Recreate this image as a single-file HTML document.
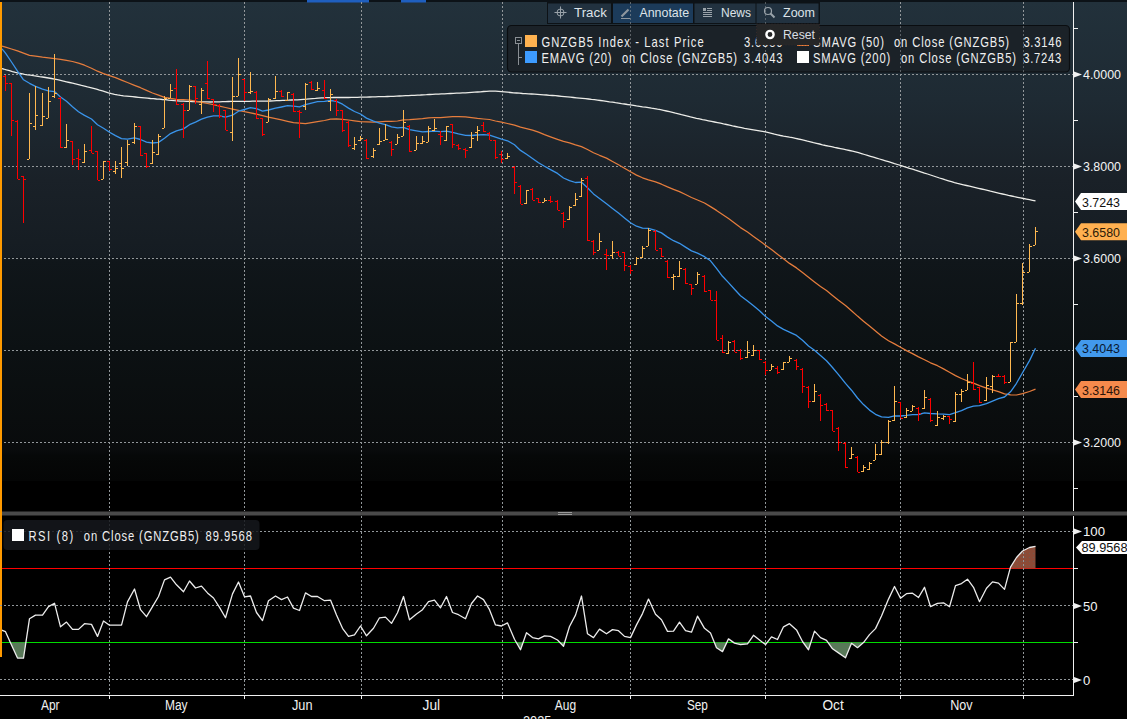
<!DOCTYPE html><html><head><meta charset="utf-8"><style>html,body{margin:0;padding:0;background:#000;width:1127px;height:719px;overflow:hidden}svg{display:block}text{font-family:"Liberation Sans",sans-serif}</style></head><body>
<svg width="1127" height="719" viewBox="0 0 1127 719">
<defs><linearGradient id="bg" gradientUnits="userSpaceOnUse" x1="0" y1="2" x2="0" y2="481"><stop offset="0.0000" stop-color="#22313b"/><stop offset="0.2046" stop-color="#1e2a33"/><stop offset="0.3716" stop-color="#1a2128"/><stop offset="0.5303" stop-color="#151c22"/><stop offset="0.5407" stop-color="#10161a"/><stop offset="0.7265" stop-color="#0c1113"/><stop offset="0.9353" stop-color="#090b0c"/><stop offset="0.9478" stop-color="#060808"/><stop offset="1.0000" stop-color="#040505"/></linearGradient><clipPath id="cm"><rect x="2" y="3" width="1071" height="478"/></clipPath><clipPath id="cr"><rect x="2" y="516" width="1071" height="179"/></clipPath><pattern id="dots" width="4" height="4" patternUnits="userSpaceOnUse"><rect width="4" height="4" fill="#8c4b37"/><rect x="1" y="1" width="1" height="1" fill="#6f5a50"/></pattern></defs>
<rect x="0" y="0" width="1127" height="719" fill="#000"/>
<rect x="0" y="2" width="1127" height="479" fill="url(#bg)"/>
<rect x="0" y="0" width="1127" height="2" fill="#0c1217"/>
<rect x="307" y="0" width="62" height="2.5" fill="#1f5fbf"/>
<rect x="401" y="0" width="25" height="2.5" fill="#1f5fbf"/>
<line x1="109.5" y1="2" x2="109.5" y2="511" stroke="#92979a" stroke-width="1" stroke-dasharray="2 2"/>
<line x1="109.5" y1="516" x2="109.5" y2="695" stroke="#92979a" stroke-width="1" stroke-dasharray="2 2"/>
<line x1="244.5" y1="2" x2="244.5" y2="511" stroke="#92979a" stroke-width="1" stroke-dasharray="2 2"/>
<line x1="244.5" y1="516" x2="244.5" y2="695" stroke="#92979a" stroke-width="1" stroke-dasharray="2 2"/>
<line x1="361.5" y1="2" x2="361.5" y2="511" stroke="#92979a" stroke-width="1" stroke-dasharray="2 2"/>
<line x1="361.5" y1="516" x2="361.5" y2="695" stroke="#92979a" stroke-width="1" stroke-dasharray="2 2"/>
<line x1="502.5" y1="2" x2="502.5" y2="511" stroke="#92979a" stroke-width="1" stroke-dasharray="2 2"/>
<line x1="502.5" y1="516" x2="502.5" y2="695" stroke="#92979a" stroke-width="1" stroke-dasharray="2 2"/>
<line x1="630.5" y1="2" x2="630.5" y2="511" stroke="#92979a" stroke-width="1" stroke-dasharray="2 2"/>
<line x1="630.5" y1="516" x2="630.5" y2="695" stroke="#92979a" stroke-width="1" stroke-dasharray="2 2"/>
<line x1="765.5" y1="2" x2="765.5" y2="511" stroke="#92979a" stroke-width="1" stroke-dasharray="2 2"/>
<line x1="765.5" y1="516" x2="765.5" y2="695" stroke="#92979a" stroke-width="1" stroke-dasharray="2 2"/>
<line x1="900.5" y1="2" x2="900.5" y2="511" stroke="#92979a" stroke-width="1" stroke-dasharray="2 2"/>
<line x1="900.5" y1="516" x2="900.5" y2="695" stroke="#92979a" stroke-width="1" stroke-dasharray="2 2"/>
<line x1="1023.5" y1="2" x2="1023.5" y2="511" stroke="#92979a" stroke-width="1" stroke-dasharray="2 2"/>
<line x1="1023.5" y1="516" x2="1023.5" y2="695" stroke="#92979a" stroke-width="1" stroke-dasharray="2 2"/>
<line x1="0" y1="74.5" x2="1073" y2="74.5" stroke="#92979a" stroke-width="1" stroke-dasharray="2 2"/>
<line x1="0" y1="166.5" x2="1073" y2="166.5" stroke="#92979a" stroke-width="1" stroke-dasharray="2 2"/>
<line x1="0" y1="258.5" x2="1073" y2="258.5" stroke="#92979a" stroke-width="1" stroke-dasharray="2 2"/>
<line x1="0" y1="350.5" x2="1073" y2="350.5" stroke="#92979a" stroke-width="1" stroke-dasharray="2 2"/>
<line x1="0" y1="442.5" x2="1073" y2="442.5" stroke="#92979a" stroke-width="1" stroke-dasharray="2 2"/>
<g clip-path="url(#cm)" fill="none" stroke-linejoin="round">
<path d="M0.5,68.2 L3.5,69 L6.5,69.9 L9.5,70.7 L12.5,71.6 L15.5,72.4 L18.5,73.1 L21.5,73.7 L24.5,74.3 L27.5,74.8 L30.5,75.2 L33.5,75.7 L36.5,76.1 L39.5,76.6 L42.5,77 L45.5,77.5 L48.5,78 L51.5,78.5 L54.5,79.1 L57.5,79.7 L60.5,80.4 L63.5,81.1 L66.5,81.8 L69.5,82.5 L72.5,83.2 L75.5,83.9 L78.5,84.6 L81.5,85.4 L84.5,86.1 L87.5,86.9 L90.5,87.6 L93.5,88.4 L96.5,89.2 L99.5,90.1 L102.5,90.9 L105.5,91.8 L108.5,92.8 L111.5,93.6 L114.5,94.3 L117.5,94.9 L120.5,95.4 L123.5,95.8 L126.5,96.1 L129.5,96.4 L132.5,96.7 L135.5,97 L138.5,97.3 L141.5,97.6 L144.5,97.9 L147.5,98.2 L150.5,98.5 L153.5,98.7 L156.5,99 L159.5,99.2 L162.5,99.5 L165.5,99.7 L168.5,100.1 L171.5,100.4 L174.5,100.7 L177.5,100.9 L180.5,101.1 L183.5,101.2 L186.5,101.3 L189.5,101.4 L192.5,101.5 L195.5,101.6 L198.5,101.7 L201.5,101.8 L204.5,101.9 L207.5,101.9 L210.5,102 L213.5,101.9 L216.5,101.9 L219.5,101.8 L222.5,101.7 L225.5,101.6 L228.5,101.5 L231.5,101.4 L234.5,101.3 L237.5,101.3 L240.5,101.3 L243.5,101.3 L246.5,101.3 L249.5,101.3 L252.5,101.2 L255.5,101.2 L258.5,101.2 L261.5,101.2 L264.5,101.2 L267.5,101.1 L270.5,101 L273.5,100.9 L276.5,100.7 L279.5,100.6 L282.5,100.4 L285.5,100.3 L288.5,100.2 L291.5,100 L294.5,99.9 L297.5,99.8 L300.5,99.6 L303.5,99.4 L306.5,99.2 L309.5,98.9 L312.5,98.6 L315.5,98.4 L318.5,98.1 L321.5,97.9 L324.5,97.8 L327.5,97.7 L330.5,97.6 L333.5,97.5 L336.5,97.5 L339.5,97.5 L342.5,97.5 L345.5,97.5 L348.5,97.5 L351.5,97.4 L354.5,97.4 L357.5,97.3 L360.5,97.2 L363.5,97.2 L366.5,97.1 L369.5,97 L372.5,96.9 L375.5,96.8 L378.5,96.7 L381.5,96.7 L384.5,96.6 L387.5,96.5 L390.5,96.4 L393.5,96.3 L396.5,96.1 L399.5,96 L402.5,95.9 L405.5,95.7 L408.5,95.6 L411.5,95.4 L414.5,95.3 L417.5,95.1 L420.5,95 L423.5,94.8 L426.5,94.7 L429.5,94.5 L432.5,94.4 L435.5,94.2 L438.5,94.1 L441.5,93.9 L444.5,93.8 L447.5,93.6 L450.5,93.5 L453.5,93.4 L456.5,93.2 L459.5,93.1 L462.5,92.9 L465.5,92.8 L468.5,92.6 L471.5,92.4 L474.5,92.2 L477.5,92 L480.5,91.8 L483.5,91.5 L486.5,91.3 L489.5,91.2 L492.5,91.2 L495.5,91.2 L498.5,91.4 L501.5,91.6 L504.5,91.9 L507.5,92.2 L510.5,92.5 L513.5,92.8 L516.5,93 L519.5,93.2 L522.5,93.5 L525.5,93.7 L528.5,93.9 L531.5,94 L534.5,94.2 L537.5,94.4 L540.5,94.6 L543.5,94.8 L546.5,95 L549.5,95.3 L552.5,95.5 L555.5,95.7 L558.5,96 L561.5,96.3 L564.5,96.6 L567.5,96.9 L570.5,97.2 L573.5,97.5 L576.5,97.8 L579.5,98.1 L582.5,98.4 L585.5,98.7 L588.5,99 L591.5,99.4 L594.5,99.7 L597.5,100.1 L600.5,100.5 L603.5,100.9 L606.5,101.3 L609.5,101.8 L612.5,102.2 L615.5,102.7 L618.5,103.1 L621.5,103.6 L624.5,104 L627.5,104.5 L630.5,104.9 L633.5,105.4 L636.5,105.9 L639.5,106.3 L642.5,106.8 L645.5,107.2 L648.5,107.7 L651.5,108.2 L654.5,108.6 L657.5,109.2 L660.5,109.7 L663.5,110.3 L666.5,111 L669.5,111.7 L672.5,112.4 L675.5,113.2 L678.5,113.9 L681.5,114.7 L684.5,115.4 L687.5,116.1 L690.5,116.9 L693.5,117.6 L696.5,118.3 L699.5,118.9 L702.5,119.6 L705.5,120.2 L708.5,120.8 L711.5,121.4 L714.5,122 L717.5,122.6 L720.5,123.2 L723.5,123.9 L726.5,124.5 L729.5,125.2 L732.5,125.9 L735.5,126.5 L738.5,127.1 L741.5,127.7 L744.5,128.3 L747.5,128.8 L750.5,129.3 L753.5,129.8 L756.5,130.3 L759.5,130.8 L762.5,131.3 L765.5,131.9 L768.5,132.6 L771.5,133.3 L774.5,134.1 L777.5,134.8 L780.5,135.5 L783.5,136.1 L786.5,136.6 L789.5,137.2 L792.5,137.7 L795.5,138.3 L798.5,139 L801.5,139.6 L804.5,140.3 L807.5,141.1 L810.5,141.8 L813.5,142.6 L816.5,143.3 L819.5,144 L822.5,144.8 L825.5,145.5 L828.5,146.1 L831.5,146.7 L834.5,147.4 L837.5,148 L840.5,148.6 L843.5,149.2 L846.5,149.8 L849.5,150.5 L852.5,151.2 L855.5,151.9 L858.5,152.7 L861.5,153.6 L864.5,154.5 L867.5,155.4 L870.5,156.3 L873.5,157.2 L876.5,158.1 L879.5,159 L882.5,159.9 L885.5,160.8 L888.5,161.7 L891.5,162.6 L894.5,163.6 L897.5,164.5 L900.5,165.4 L903.5,166.4 L906.5,167.3 L909.5,168.3 L912.5,169.2 L915.5,170.2 L918.5,171.1 L921.5,172.1 L924.5,173.1 L927.5,174 L930.5,175 L933.5,176 L936.5,177 L939.5,178 L942.5,178.9 L945.5,179.9 L948.5,180.8 L951.5,181.7 L954.5,182.6 L957.5,183.4 L960.5,184.1 L963.5,184.8 L966.5,185.5 L969.5,186.2 L972.5,186.9 L975.5,187.6 L978.5,188.3 L981.5,189 L984.5,189.7 L987.5,190.4 L990.5,191.2 L993.5,191.9 L996.5,192.6 L999.5,193.3 L1002.5,194 L1005.5,194.7 L1008.5,195.4 L1011.5,196 L1014.5,196.7 L1017.5,197.3 L1020.5,197.9 L1023.5,198.5 L1026.5,199.1 L1029.5,199.7 L1032.5,200.3 L1035.5,200.9" stroke="#ececE8" stroke-width="1.3"/>
<path d="M2,46.2 L5.5,47.1 L11.5,49 L17.5,50.9 L23.5,53.1 L29.5,55.3 L35.5,56.2 L42.5,57.2 L48.5,57.9 L54.5,58.6 L60.5,59.3 L66.5,60.3 L72.5,61.5 L78.5,63.2 L84.5,65.2 L91.5,68.2 L97.5,71.2 L103.5,73.7 L109.5,75.7 L115.5,77.7 L121.5,80.1 L127.5,82.5 L134.5,85.3 L140.5,87.7 L146.5,90.4 L152.5,93 L158.5,95.2 L164.5,97.3 L170.5,98.4 L176.5,99.3 L183.5,99.7 L189.5,100 L195.5,101.1 L201.5,102.3 L207.5,103.5 L213.5,104.7 L219.5,106.1 L225.5,107.5 L232.5,109.1 L238.5,110.4 L244.5,111.7 L250.5,112.8 L256.5,114.1 L262.5,115.7 L268.5,117.2 L275.5,118.6 L281.5,119.9 L287.5,121.3 L293.5,122.6 L299.5,123.2 L305.5,123.7 L311.5,122.6 L317.5,121.7 L324.5,120.5 L330.5,119.1 L336.5,118.8 L342.5,119.4 L348.5,120 L354.5,120.8 L360.5,121.7 L366.5,121.9 L373.5,122.1 L379.5,121.8 L385.5,121.4 L391.5,121.3 L397.5,121 L403.5,119.9 L409.5,119.7 L416.5,119.1 L422.5,118.6 L428.5,117.8 L434.5,117.5 L440.5,117.7 L446.5,117.1 L452.5,116.7 L458.5,116.6 L465.5,116.8 L471.5,117.6 L477.5,118.4 L483.5,119 L489.5,119.5 L495.5,121 L501.5,122.2 L507.5,123.5 L514.5,125.2 L520.5,127.2 L526.5,128.7 L532.5,130.1 L538.5,132.2 L544.5,134.7 L550.5,136.9 L557.5,139.3 L563.5,141.3 L569.5,142.8 L575.5,144.8 L581.5,146.6 L587.5,149.5 L593.5,152.7 L599.5,155.3 L606.5,158.1 L612.5,161.5 L618.5,164.8 L624.5,168.3 L630.5,171.8 L636.5,175.1 L642.5,177.8 L648.5,179.8 L655.5,181.9 L661.5,184.2 L667.5,186.9 L673.5,189.3 L679.5,191.6 L685.5,194.5 L691.5,197.5 L697.5,200 L704.5,203 L710.5,206.6 L716.5,210.4 L722.5,214.5 L728.5,218.6 L734.5,223 L740.5,227.6 L747.5,232 L753.5,236.4 L759.5,240.7 L765.5,245.2 L771.5,249.5 L777.5,254.2 L783.5,258.8 L789.5,263.4 L796.5,267.9 L802.5,272.5 L808.5,277.3 L814.5,282 L820.5,286.5 L826.5,290.6 L832.5,295.4 L838.5,300.3 L845.5,305.6 L851.5,310.7 L857.5,316.1 L863.5,321.2 L869.5,326.1 L875.5,331 L881.5,335.9 L888.5,340.7 L894.5,343.9 L900.5,347.2 L906.5,350.6 L912.5,353.6 L918.5,356.9 L924.5,359.7 L930.5,362.8 L937.5,365.7 L943.5,368.9 L949.5,372.3 L955.5,375.6 L961.5,378.5 L967.5,381 L973.5,383.2 L979.5,385.7 L986.5,388.1 L992.5,389.9 L998.5,391.7 L1004.5,393.9 L1010.5,394.9 L1016.5,395 L1022.5,393.6 L1029.5,391.5 L1035.5,389.2" stroke="#e67d3d" stroke-width="1.25"/>
<path d="M2,48.8 L5.5,53.2 L11.5,62 L17.5,71.2 L23.5,79.8 L29.5,83.3 L35.5,86.4 L42.5,89.2 L48.5,90.8 L54.5,91.6 L60.5,97 L66.5,101.3 L72.5,106.7 L78.5,111.7 L84.5,115.4 L91.5,119 L97.5,124.8 L103.5,128.3 L109.5,132.2 L115.5,135.6 L121.5,138.7 L127.5,139.2 L134.5,137.9 L140.5,139.5 L146.5,142.1 L152.5,143 L158.5,142.4 L164.5,138.2 L170.5,133.6 L176.5,130.8 L183.5,128.9 L189.5,124.7 L195.5,122.1 L201.5,119.1 L207.5,117.1 L213.5,115.8 L219.5,115.9 L225.5,117.2 L232.5,115.2 L238.5,111.2 L244.5,109.5 L250.5,107.7 L256.5,108.7 L262.5,111.1 L268.5,110 L275.5,108.2 L281.5,107 L287.5,105.7 L293.5,106.2 L299.5,106.8 L305.5,104.7 L311.5,103.1 L317.5,101.7 L324.5,101.3 L330.5,100.5 L336.5,101.4 L342.5,104.2 L348.5,108.1 L354.5,111.5 L360.5,114 L366.5,118.1 L373.5,121.2 L379.5,123.1 L385.5,124.6 L391.5,126.9 L397.5,127.9 L403.5,127.3 L409.5,129.6 L416.5,130.9 L422.5,131.9 L428.5,131.5 L434.5,131.2 L440.5,131.6 L446.5,131.1 L452.5,132.3 L458.5,133.8 L465.5,135.3 L471.5,135.5 L477.5,135 L483.5,134.6 L489.5,135.1 L495.5,137.2 L501.5,139.2 L507.5,140.8 L514.5,144.8 L520.5,150.4 L526.5,154.2 L532.5,158.5 L538.5,162.7 L544.5,166.3 L550.5,169.6 L557.5,173.4 L563.5,178 L569.5,180.7 L575.5,182.5 L581.5,182.2 L587.5,187.8 L593.5,193.9 L599.5,198.4 L606.5,203.8 L612.5,208.4 L618.5,212.9 L624.5,217.9 L630.5,222.8 L636.5,226.2 L642.5,228.2 L648.5,228.4 L655.5,230.4 L661.5,232.9 L667.5,237.1 L673.5,240.7 L679.5,243.3 L685.5,247.1 L691.5,250.9 L697.5,253.1 L704.5,256.7 L710.5,260.8 L716.5,268.3 L722.5,276.3 L728.5,282.6 L734.5,289.2 L740.5,295.7 L747.5,301.1 L753.5,305.7 L759.5,310.8 L765.5,316.4 L771.5,321 L777.5,325.9 L783.5,329.4 L789.5,332.1 L796.5,335.4 L802.5,340.2 L808.5,346 L814.5,350.3 L820.5,355.6 L826.5,360.8 L832.5,367.5 L838.5,374.6 L845.5,383.4 L851.5,390.2 L857.5,398 L863.5,404.6 L869.5,410.1 L875.5,414.3 L881.5,416.9 L888.5,417.3 L894.5,415.8 L900.5,416 L906.5,415.4 L912.5,414.6 L918.5,414.5 L924.5,412.8 L930.5,413.5 L937.5,413.9 L943.5,414.1 L949.5,414.6 L955.5,412.7 L961.5,410.6 L967.5,407.9 L973.5,406.1 L979.5,405.7 L986.5,403.7 L992.5,401.1 L998.5,398.7 L1004.5,397 L1010.5,391.8 L1016.5,383.3 L1022.5,372.7 L1029.5,360.6 L1035.5,348.2" stroke="#3a94ea" stroke-width="1.3"/>
</g>
<g clip-path="url(#cm)" shape-rendering="crispEdges">
<path d="M5,75h1v16h-1z M3,76h2v1h-2z M6,83h2v1h-2z" fill="#ff0000"/>
<path d="M11,83h1v53h-1z M9,83h2v1h-2z M12,120h2v1h-2z" fill="#ff0000"/>
<path d="M17,120h1v59h-1z M15,121h2v1h-2z M18,179h2v1h-2z" fill="#ff0000"/>
<path d="M23,176h1v47h-1z M21,176h2v1h-2z M24,179h2v1h-2z" fill="#ff0000"/>
<path d="M29,93h1v66h-1z M27,159h2v1h-2z M30,123h2v1h-2z" fill="#ffb850"/>
<path d="M35,86h1v44h-1z M33,126h2v1h-2z M36,115h2v1h-2z" fill="#ffb850"/>
<path d="M42,93h1v33h-1z M40,125h2v1h-2z M43,116h2v1h-2z" fill="#ffb850"/>
<path d="M48,87h1v31h-1z M46,118h2v1h-2z M49,101h2v1h-2z" fill="#ffb850"/>
<path d="M54,54h1v44h-1z M52,96h2v1h-2z M55,93h2v1h-2z" fill="#ffb850"/>
<path d="M60,97h1v51h-1z M58,98h2v1h-2z M61,147h2v1h-2z" fill="#ff0000"/>
<path d="M66,124h1v24h-1z M64,147h2v1h-2z M67,140h2v1h-2z" fill="#ffb850"/>
<path d="M72,141h1v24h-1z M70,141h2v1h-2z M73,159h2v1h-2z" fill="#ff0000"/>
<path d="M78,149h1v21h-1z M76,158h2v1h-2z M79,159h2v1h-2z" fill="#ff0000"/>
<path d="M84,144h1v19h-1z M82,162h2v1h-2z M85,151h2v1h-2z" fill="#ffb850"/>
<path d="M91,126h1v27h-1z M89,150h2v1h-2z M92,153h2v1h-2z" fill="#ff0000"/>
<path d="M97,151h1v29h-1z M95,151h2v1h-2z M98,180h2v1h-2z" fill="#ff0000"/>
<path d="M103,161h1v18h-1z M101,179h2v1h-2z M104,161h2v1h-2z" fill="#ffb850"/>
<path d="M109,161h1v10h-1z M107,161h2v1h-2z M110,169h2v1h-2z" fill="#ff0000"/>
<path d="M115,161h1v13h-1z M113,171h2v1h-2z M116,168h2v1h-2z" fill="#ffb850"/>
<path d="M121,147h1v31h-1z M119,163h2v1h-2z M122,168h2v1h-2z" fill="#ffb850"/>
<path d="M127,140h1v26h-1z M125,162h2v1h-2z M128,144h2v1h-2z" fill="#ffb850"/>
<path d="M134,123h1v21h-1z M132,142h2v1h-2z M135,126h2v1h-2z" fill="#ffb850"/>
<path d="M140,126h1v30h-1z M138,126h2v1h-2z M141,155h2v1h-2z" fill="#ff0000"/>
<path d="M146,153h1v15h-1z M144,153h2v1h-2z M147,166h2v1h-2z" fill="#ff0000"/>
<path d="M152,140h1v24h-1z M150,163h2v1h-2z M153,152h2v1h-2z" fill="#ffb850"/>
<path d="M158,134h1v21h-1z M156,154h2v1h-2z M159,136h2v1h-2z" fill="#ffb850"/>
<path d="M164,96h1v32h-1z M162,128h2v1h-2z M165,98h2v1h-2z" fill="#ffb850"/>
<path d="M170,84h1v14h-1z M168,98h2v1h-2z M171,90h2v1h-2z" fill="#ffb850"/>
<path d="M176,69h1v36h-1z M174,88h2v1h-2z M177,104h2v1h-2z" fill="#ff0000"/>
<path d="M183,103h1v35h-1z M181,104h2v1h-2z M184,110h2v1h-2z" fill="#ff0000"/>
<path d="M189,85h1v25h-1z M187,110h2v1h-2z M190,86h2v1h-2z" fill="#ffb850"/>
<path d="M195,86h1v18h-1z M193,86h2v1h-2z M196,98h2v1h-2z" fill="#ff0000"/>
<path d="M201,88h1v26h-1z M199,104h2v1h-2z M202,90h2v1h-2z" fill="#ffb850"/>
<path d="M207,61h1v38h-1z M205,83h2v1h-2z M208,98h2v1h-2z" fill="#ff0000"/>
<path d="M213,99h1v13h-1z M211,99h2v1h-2z M214,104h2v1h-2z" fill="#ff0000"/>
<path d="M219,104h1v14h-1z M217,105h2v1h-2z M220,116h2v1h-2z" fill="#ff0000"/>
<path d="M225,110h1v20h-1z M223,110h2v1h-2z M226,130h2v1h-2z" fill="#ff0000"/>
<path d="M232,77h1v64h-1z M230,132h2v1h-2z M233,96h2v1h-2z" fill="#ffb850"/>
<path d="M238,58h1v38h-1z M236,96h2v1h-2z M239,74h2v1h-2z" fill="#ffb850"/>
<path d="M244,79h1v22h-1z M242,79h2v1h-2z M245,92h2v1h-2z" fill="#ff0000"/>
<path d="M250,72h1v22h-1z M248,92h2v1h-2z M251,91h2v1h-2z" fill="#ffb850"/>
<path d="M256,91h1v28h-1z M254,92h2v1h-2z M257,118h2v1h-2z" fill="#ff0000"/>
<path d="M262,118h1v18h-1z M260,118h2v1h-2z M263,134h2v1h-2z" fill="#ff0000"/>
<path d="M268,98h1v24h-1z M266,122h2v1h-2z M269,99h2v1h-2z" fill="#ffb850"/>
<path d="M275,76h1v23h-1z M273,98h2v1h-2z M276,91h2v1h-2z" fill="#ffb850"/>
<path d="M281,90h1v7h-1z M279,91h2v1h-2z M282,96h2v1h-2z" fill="#ff0000"/>
<path d="M287,92h1v9h-1z M285,100h2v1h-2z M288,92h2v1h-2z" fill="#ffb850"/>
<path d="M293,93h1v19h-1z M291,94h2v1h-2z M294,111h2v1h-2z" fill="#ff0000"/>
<path d="M299,110h1v28h-1z M297,111h2v1h-2z M300,112h2v1h-2z" fill="#ff0000"/>
<path d="M305,83h1v27h-1z M303,106h2v1h-2z M306,84h2v1h-2z" fill="#ffb850"/>
<path d="M311,81h1v9h-1z M309,82h2v1h-2z M312,89h2v1h-2z" fill="#ff0000"/>
<path d="M317,82h1v9h-1z M315,90h2v1h-2z M318,88h2v1h-2z" fill="#ffb850"/>
<path d="M324,80h1v19h-1z M322,90h2v1h-2z M325,98h2v1h-2z" fill="#ff0000"/>
<path d="M330,89h1v22h-1z M328,101h2v1h-2z M331,94h2v1h-2z" fill="#ffb850"/>
<path d="M336,99h1v17h-1z M334,100h2v1h-2z M337,110h2v1h-2z" fill="#ff0000"/>
<path d="M342,110h1v22h-1z M340,110h2v1h-2z M343,130h2v1h-2z" fill="#ff0000"/>
<path d="M348,121h1v26h-1z M346,122h2v1h-2z M349,145h2v1h-2z" fill="#ff0000"/>
<path d="M354,137h1v13h-1z M352,148h2v1h-2z M355,144h2v1h-2z" fill="#ffb850"/>
<path d="M360,136h1v5h-1z M358,140h2v1h-2z M361,138h2v1h-2z" fill="#ffb850"/>
<path d="M366,139h1v20h-1z M364,140h2v1h-2z M367,158h2v1h-2z" fill="#ff0000"/>
<path d="M373,148h1v10h-1z M371,156h2v1h-2z M374,150h2v1h-2z" fill="#ffb850"/>
<path d="M379,128h1v17h-1z M377,144h2v1h-2z M380,141h2v1h-2z" fill="#ffb850"/>
<path d="M385,124h1v16h-1z M383,140h2v1h-2z M386,139h2v1h-2z" fill="#ffb850"/>
<path d="M391,141h1v15h-1z M389,142h2v1h-2z M392,149h2v1h-2z" fill="#ff0000"/>
<path d="M397,134h1v10h-1z M395,144h2v1h-2z M398,137h2v1h-2z" fill="#ffb850"/>
<path d="M403,110h1v26h-1z M401,136h2v1h-2z M404,122h2v1h-2z" fill="#ffb850"/>
<path d="M409,125h1v27h-1z M407,126h2v1h-2z M410,151h2v1h-2z" fill="#ff0000"/>
<path d="M416,136h1v14h-1z M414,150h2v1h-2z M417,143h2v1h-2z" fill="#ffb850"/>
<path d="M422,136h1v8h-1z M420,143h2v1h-2z M423,141h2v1h-2z" fill="#ffb850"/>
<path d="M428,126h1v16h-1z M426,142h2v1h-2z M429,128h2v1h-2z" fill="#ffb850"/>
<path d="M434,119h1v12h-1z M432,130h2v1h-2z M435,128h2v1h-2z" fill="#ffb850"/>
<path d="M440,131h1v14h-1z M438,134h2v1h-2z M441,136h2v1h-2z" fill="#ff0000"/>
<path d="M446,126h1v15h-1z M444,140h2v1h-2z M447,126h2v1h-2z" fill="#ffb850"/>
<path d="M452,124h1v24h-1z M450,124h2v1h-2z M453,144h2v1h-2z" fill="#ff0000"/>
<path d="M458,144h1v6h-1z M456,145h2v1h-2z M459,148h2v1h-2z" fill="#ff0000"/>
<path d="M465,148h1v10h-1z M463,149h2v1h-2z M466,150h2v1h-2z" fill="#ff0000"/>
<path d="M471,132h1v16h-1z M469,147h2v1h-2z M472,138h2v1h-2z" fill="#ffb850"/>
<path d="M477,126h1v15h-1z M475,132h2v1h-2z M478,130h2v1h-2z" fill="#ffb850"/>
<path d="M483,122h1v10h-1z M481,125h2v1h-2z M484,131h2v1h-2z" fill="#ff0000"/>
<path d="M489,132h1v8h-1z M487,133h2v1h-2z M490,140h2v1h-2z" fill="#ff0000"/>
<path d="M495,140h1v19h-1z M493,140h2v1h-2z M496,157h2v1h-2z" fill="#ff0000"/>
<path d="M501,151h1v12h-1z M499,154h2v1h-2z M502,159h2v1h-2z" fill="#ff0000"/>
<path d="M507,153h1v6h-1z M505,158h2v1h-2z M508,156h2v1h-2z" fill="#ffb850"/>
<path d="M514,166h1v28h-1z M512,167h2v1h-2z M515,182h2v1h-2z" fill="#ff0000"/>
<path d="M520,185h1v19h-1z M518,186h2v1h-2z M521,204h2v1h-2z" fill="#ff0000"/>
<path d="M526,190h1v14h-1z M524,203h2v1h-2z M527,190h2v1h-2z" fill="#ffb850"/>
<path d="M532,188h1v12h-1z M530,189h2v1h-2z M533,200h2v1h-2z" fill="#ff0000"/>
<path d="M538,198h1v5h-1z M536,198h2v1h-2z M539,202h2v1h-2z" fill="#ff0000"/>
<path d="M544,198h1v4h-1z M542,202h2v1h-2z M545,200h2v1h-2z" fill="#ffb850"/>
<path d="M550,196h1v7h-1z M548,200h2v1h-2z M551,201h2v1h-2z" fill="#ff0000"/>
<path d="M557,200h1v10h-1z M555,201h2v1h-2z M558,210h2v1h-2z" fill="#ff0000"/>
<path d="M563,212h1v16h-1z M561,213h2v1h-2z M564,221h2v1h-2z" fill="#ff0000"/>
<path d="M569,206h1v14h-1z M567,219h2v1h-2z M570,207h2v1h-2z" fill="#ffb850"/>
<path d="M575,193h1v13h-1z M573,205h2v1h-2z M576,199h2v1h-2z" fill="#ffb850"/>
<path d="M581,178h1v19h-1z M579,196h2v1h-2z M582,180h2v1h-2z" fill="#ffb850"/>
<path d="M587,176h1v65h-1z M585,178h2v1h-2z M588,240h2v1h-2z" fill="#ff0000"/>
<path d="M593,240h1v15h-1z M591,241h2v1h-2z M594,252h2v1h-2z" fill="#ff0000"/>
<path d="M599,233h1v17h-1z M597,250h2v1h-2z M600,241h2v1h-2z" fill="#ffb850"/>
<path d="M606,249h1v21h-1z M604,254h2v1h-2z M607,255h2v1h-2z" fill="#ff0000"/>
<path d="M612,241h1v18h-1z M610,255h2v1h-2z M613,252h2v1h-2z" fill="#ffb850"/>
<path d="M618,251h1v5h-1z M616,252h2v1h-2z M619,256h2v1h-2z" fill="#ff0000"/>
<path d="M624,252h1v19h-1z M622,252h2v1h-2z M625,265h2v1h-2z" fill="#ff0000"/>
<path d="M630,265h1v9h-1z M628,266h2v1h-2z M631,270h2v1h-2z" fill="#ff0000"/>
<path d="M636,257h1v8h-1z M634,264h2v1h-2z M637,258h2v1h-2z" fill="#ffb850"/>
<path d="M642,246h1v12h-1z M640,257h2v1h-2z M643,248h2v1h-2z" fill="#ffb850"/>
<path d="M648,228h1v18h-1z M646,246h2v1h-2z M649,230h2v1h-2z" fill="#ffb850"/>
<path d="M655,230h1v20h-1z M653,231h2v1h-2z M656,250h2v1h-2z" fill="#ff0000"/>
<path d="M661,248h1v9h-1z M659,248h2v1h-2z M662,256h2v1h-2z" fill="#ff0000"/>
<path d="M667,260h1v18h-1z M665,261h2v1h-2z M668,277h2v1h-2z" fill="#ff0000"/>
<path d="M673,274h1v16h-1z M671,277h2v1h-2z M674,276h2v1h-2z" fill="#ffb850"/>
<path d="M679,261h1v16h-1z M677,276h2v1h-2z M680,268h2v1h-2z" fill="#ffb850"/>
<path d="M685,268h1v16h-1z M683,269h2v1h-2z M686,283h2v1h-2z" fill="#ff0000"/>
<path d="M691,284h1v11h-1z M689,284h2v1h-2z M692,288h2v1h-2z" fill="#ff0000"/>
<path d="M697,272h1v12h-1z M695,284h2v1h-2z M698,274h2v1h-2z" fill="#ffb850"/>
<path d="M704,275h1v17h-1z M702,276h2v1h-2z M705,291h2v1h-2z" fill="#ff0000"/>
<path d="M710,290h1v10h-1z M708,290h2v1h-2z M711,300h2v1h-2z" fill="#ff0000"/>
<path d="M716,291h1v49h-1z M714,300h2v1h-2z M717,340h2v1h-2z" fill="#ff0000"/>
<path d="M722,335h1v18h-1z M720,338h2v1h-2z M723,352h2v1h-2z" fill="#ff0000"/>
<path d="M728,341h1v13h-1z M726,353h2v1h-2z M729,342h2v1h-2z" fill="#ffb850"/>
<path d="M734,340h1v12h-1z M732,341h2v1h-2z M735,352h2v1h-2z" fill="#ff0000"/>
<path d="M740,349h1v11h-1z M738,350h2v1h-2z M741,358h2v1h-2z" fill="#ff0000"/>
<path d="M747,341h1v17h-1z M745,357h2v1h-2z M748,352h2v1h-2z" fill="#ffb850"/>
<path d="M753,345h1v11h-1z M751,355h2v1h-2z M754,350h2v1h-2z" fill="#ffb850"/>
<path d="M759,350h1v10h-1z M757,350h2v1h-2z M760,359h2v1h-2z" fill="#ff0000"/>
<path d="M765,361h1v14h-1z M763,362h2v1h-2z M766,370h2v1h-2z" fill="#ff0000"/>
<path d="M771,364h1v6h-1z M769,370h2v1h-2z M772,366h2v1h-2z" fill="#ffb850"/>
<path d="M777,366h1v8h-1z M775,368h2v1h-2z M778,372h2v1h-2z" fill="#ff0000"/>
<path d="M783,362h1v8h-1z M781,369h2v1h-2z M784,362h2v1h-2z" fill="#ffb850"/>
<path d="M789,356h1v6h-1z M787,362h2v1h-2z M790,358h2v1h-2z" fill="#ffb850"/>
<path d="M796,359h1v11h-1z M794,360h2v1h-2z M797,366h2v1h-2z" fill="#ff0000"/>
<path d="M802,368h1v25h-1z M800,369h2v1h-2z M803,386h2v1h-2z" fill="#ff0000"/>
<path d="M808,386h1v22h-1z M806,387h2v1h-2z M809,401h2v1h-2z" fill="#ff0000"/>
<path d="M814,384h1v18h-1z M812,401h2v1h-2z M815,391h2v1h-2z" fill="#ffb850"/>
<path d="M820,394h1v27h-1z M818,395h2v1h-2z M821,405h2v1h-2z" fill="#ff0000"/>
<path d="M826,403h1v8h-1z M824,404h2v1h-2z M827,410h2v1h-2z" fill="#ff0000"/>
<path d="M832,410h1v21h-1z M830,410h2v1h-2z M833,431h2v1h-2z" fill="#ff0000"/>
<path d="M838,427h1v24h-1z M836,428h2v1h-2z M839,442h2v1h-2z" fill="#ff0000"/>
<path d="M845,442h1v26h-1z M843,443h2v1h-2z M846,467h2v1h-2z" fill="#ff0000"/>
<path d="M851,447h1v12h-1z M849,458h2v1h-2z M852,454h2v1h-2z" fill="#ffb850"/>
<path d="M857,456h1v16h-1z M855,457h2v1h-2z M858,472h2v1h-2z" fill="#ff0000"/>
<path d="M863,465h1v7h-1z M861,471h2v1h-2z M864,467h2v1h-2z" fill="#ffb850"/>
<path d="M869,462h1v8h-1z M867,469h2v1h-2z M870,463h2v1h-2z" fill="#ffb850"/>
<path d="M875,444h1v16h-1z M873,460h2v1h-2z M876,454h2v1h-2z" fill="#ffb850"/>
<path d="M881,440h1v15h-1z M879,454h2v1h-2z M882,442h2v1h-2z" fill="#ffb850"/>
<path d="M888,420h1v24h-1z M886,442h2v1h-2z M889,421h2v1h-2z" fill="#ffb850"/>
<path d="M894,386h1v35h-1z M892,420h2v1h-2z M895,401h2v1h-2z" fill="#ffb850"/>
<path d="M900,402h1v16h-1z M898,402h2v1h-2z M901,418h2v1h-2z" fill="#ff0000"/>
<path d="M906,408h1v10h-1z M904,417h2v1h-2z M907,410h2v1h-2z" fill="#ffb850"/>
<path d="M912,405h1v6h-1z M910,411h2v1h-2z M913,406h2v1h-2z" fill="#ffb850"/>
<path d="M918,407h1v14h-1z M916,408h2v1h-2z M919,413h2v1h-2z" fill="#ff0000"/>
<path d="M924,390h1v19h-1z M922,408h2v1h-2z M925,397h2v1h-2z" fill="#ffb850"/>
<path d="M930,398h1v24h-1z M928,399h2v1h-2z M931,420h2v1h-2z" fill="#ff0000"/>
<path d="M937,411h1v15h-1z M935,425h2v1h-2z M938,417h2v1h-2z" fill="#ffb850"/>
<path d="M943,415h1v5h-1z M941,418h2v1h-2z M944,416h2v1h-2z" fill="#ffb850"/>
<path d="M949,416h1v8h-1z M947,416h2v1h-2z M950,419h2v1h-2z" fill="#ff0000"/>
<path d="M955,392h1v30h-1z M953,421h2v1h-2z M956,394h2v1h-2z" fill="#ffb850"/>
<path d="M961,389h1v13h-1z M959,394h2v1h-2z M962,391h2v1h-2z" fill="#ffb850"/>
<path d="M967,374h1v16h-1z M965,390h2v1h-2z M968,382h2v1h-2z" fill="#ffb850"/>
<path d="M973,362h1v28h-1z M971,383h2v1h-2z M974,389h2v1h-2z" fill="#ff0000"/>
<path d="M979,387h1v16h-1z M977,387h2v1h-2z M980,402h2v1h-2z" fill="#ff0000"/>
<path d="M986,377h1v24h-1z M984,400h2v1h-2z M987,385h2v1h-2z" fill="#ffb850"/>
<path d="M992,375h1v18h-1z M990,386h2v1h-2z M993,376h2v1h-2z" fill="#ffb850"/>
<path d="M998,374h1v3h-1z M996,376h2v1h-2z M999,376h2v1h-2z" fill="#ff0000"/>
<path d="M1004,375h1v9h-1z M1002,376h2v1h-2z M1005,382h2v1h-2z" fill="#ff0000"/>
<path d="M1010,342h1v40h-1z M1008,382h2v1h-2z M1011,342h2v1h-2z" fill="#ffb850"/>
<path d="M1016,294h1v48h-1z M1014,342h2v1h-2z M1017,303h2v1h-2z" fill="#ffb850"/>
<path d="M1022,263h1v42h-1z M1020,303h2v1h-2z M1023,272h2v1h-2z" fill="#ffb850"/>
<path d="M1029,244h1v28h-1z M1027,272h2v1h-2z M1030,246h2v1h-2z" fill="#ffb850"/>
<path d="M1035,227h1v18h-1z M1033,245h2v1h-2z M1036,231h2v1h-2z" fill="#ffb850"/>
</g>
<rect x="1073" y="2" width="1" height="509" fill="#f0f0f0"/>
<path d="M1074,71.5 L1082,74.5 L1074,77.5z" fill="#f0f0f0"/>
<text x="1083" y="79.3" font-size="13.5" fill="#f4f4f4" textLength="38" lengthAdjust="spacingAndGlyphs">4.0000</text>
<path d="M1074,163.5 L1082,166.5 L1074,169.5z" fill="#f0f0f0"/>
<text x="1083" y="171.3" font-size="13.5" fill="#f4f4f4" textLength="38" lengthAdjust="spacingAndGlyphs">3.8000</text>
<path d="M1074,255.5 L1082,258.5 L1074,261.5z" fill="#f0f0f0"/>
<text x="1083" y="263.3" font-size="13.5" fill="#f4f4f4" textLength="38" lengthAdjust="spacingAndGlyphs">3.6000</text>
<path d="M1074,439.5 L1082,442.5 L1074,445.5z" fill="#f0f0f0"/>
<text x="1083" y="447.3" font-size="13.5" fill="#f4f4f4" textLength="38" lengthAdjust="spacingAndGlyphs">3.2000</text>
<rect x="1074" y="28" width="4" height="1" fill="#f0f0f0"/>
<rect x="1074" y="120" width="4" height="1" fill="#f0f0f0"/>
<rect x="1074" y="212" width="4" height="1" fill="#f0f0f0"/>
<rect x="1074" y="304" width="4" height="1" fill="#f0f0f0"/>
<rect x="1074" y="396" width="4" height="1" fill="#f0f0f0"/>
<rect x="1074" y="488" width="4" height="1" fill="#f0f0f0"/>
<path d="M1075,201.5 L1081,193.0 L1127,193.0 L1127,210.0 L1081,210.0z" fill="#ffffff"/><text x="1082" y="206.5" font-size="13.5" fill="#101010" textLength="38" lengthAdjust="spacingAndGlyphs">3.7243</text>
<path d="M1075,231.8 L1081,223.3 L1127,223.3 L1127,240.3 L1081,240.3z" fill="#ffb050"/><text x="1082" y="236.8" font-size="13.5" fill="#2a1a08" textLength="38" lengthAdjust="spacingAndGlyphs">3.6580</text>
<path d="M1075,348.4 L1081,339.9 L1127,339.9 L1127,356.9 L1081,356.9z" fill="#4299ec"/><text x="1082" y="353.4" font-size="13.5" fill="#0a1830" textLength="38" lengthAdjust="spacingAndGlyphs">3.4043</text>
<path d="M1075,389.6 L1081,381.1 L1127,381.1 L1127,398.1 L1081,398.1z" fill="#f58a4c"/><text x="1082" y="394.6" font-size="13.5" fill="#2a1208" textLength="38" lengthAdjust="spacingAndGlyphs">3.3146</text>
<rect x="507.5" y="25.5" width="562" height="46.5" rx="4" fill="#1b2228" stroke="#0a0d10" stroke-width="1.2"/>
<line x1="630.5" y1="26" x2="630.5" y2="72" stroke="#92979a" stroke-opacity="0.55" stroke-width="1" stroke-dasharray="2 2"/>
<line x1="765.5" y1="26" x2="765.5" y2="72" stroke="#92979a" stroke-opacity="0.55" stroke-width="1" stroke-dasharray="2 2"/>
<line x1="900.5" y1="26" x2="900.5" y2="72" stroke="#92979a" stroke-opacity="0.55" stroke-width="1" stroke-dasharray="2 2"/>
<line x1="1023.5" y1="26" x2="1023.5" y2="72" stroke="#92979a" stroke-opacity="0.55" stroke-width="1" stroke-dasharray="2 2"/>
<rect x="515.5" y="37.5" width="6" height="6" fill="none" stroke="#8a8f94" stroke-width="1"/>
<rect x="517" y="40" width="3" height="1" fill="#8a8f94"/>
<rect x="518" y="44" width="1" height="21" fill="#8a8f94"/>
<rect x="518" y="57" width="4" height="1" fill="#8a8f94"/>
<rect x="525" y="35" width="12" height="12" fill="#ffb250"/>
<rect x="525" y="51" width="12" height="12" fill="#3d9bff"/>
<rect x="797" y="35" width="12" height="11" fill="#ef7f3a"/>
<rect x="797" y="51" width="12" height="12" fill="#ffffff"/>
<text transform="translate(541.5,46.8) scale(0.8,1)" font-size="14" fill="#f0f0f0" textLength="202.75" lengthAdjust="spacing">GNZGB5 Index - Last Price</text>
<text transform="translate(744,46.8) scale(0.8,1)" font-size="14" fill="#f0f0f0" textLength="48.25" lengthAdjust="spacing">3.6580</text>
<text transform="translate(813,46.8) scale(0.8,1)" font-size="14" fill="#f0f0f0" textLength="88.75" lengthAdjust="spacing">SMAVG (50)</text>
<text transform="translate(894,46.8) scale(0.8,1)" font-size="14" fill="#f0f0f0" textLength="143.75" lengthAdjust="spacing">on Close (GNZGB5)</text>
<text transform="translate(1023.4,46.8) scale(0.8,1)" font-size="14" fill="#f0f0f0" textLength="47.50" lengthAdjust="spacing">3.3146</text>
<text transform="translate(541.5,62.6) scale(0.8,1)" font-size="14" fill="#f0f0f0" textLength="87.50" lengthAdjust="spacing">EMAVG (20)</text>
<text transform="translate(622,62.6) scale(0.8,1)" font-size="14" fill="#f0f0f0" textLength="143.75" lengthAdjust="spacing">on Close (GNZGB5)</text>
<text transform="translate(743.8,62.6) scale(0.8,1)" font-size="14" fill="#f0f0f0" textLength="48.50" lengthAdjust="spacing">3.4043</text>
<text transform="translate(813,62.6) scale(0.8,1)" font-size="14" fill="#f0f0f0" textLength="96.50" lengthAdjust="spacing">SMAVG (200)</text>
<text transform="translate(901,62.6) scale(0.8,1)" font-size="14" fill="#f0f0f0" textLength="143.75" lengthAdjust="spacing">on Close (GNZGB5)</text>
<text transform="translate(1023.2,62.6) scale(0.8,1)" font-size="14" fill="#f0f0f0" textLength="47.50" lengthAdjust="spacing">3.7243</text>
<rect x="547" y="2" width="273" height="22" fill="#0d1216"/>
<rect x="548" y="3.5" width="63" height="19.5" fill="#223240"/>
<rect x="613" y="3.5" width="80" height="19.5" fill="#1c3b5a"/>
<rect x="694.5" y="3.5" width="61" height="19.5" fill="#223240"/>
<rect x="756.5" y="3.5" width="62" height="19.5" fill="#223240"/>
<line x1="630.5" y1="2" x2="630.5" y2="24" stroke="#92979a" stroke-opacity="0.6" stroke-width="1" stroke-dasharray="2 2"/>
<line x1="765.5" y1="2" x2="765.5" y2="45" stroke="#92979a" stroke-opacity="0.5" stroke-width="1" stroke-dasharray="2 2"/>
<text x="574" y="17.2" font-size="13" fill="#dde3e8" textLength="32.8" lengthAdjust="spacingAndGlyphs">Track</text>
<text x="639.4" y="17.2" font-size="13" fill="#dde3e8" textLength="49.7" lengthAdjust="spacingAndGlyphs">Annotate</text>
<text x="721" y="17.2" font-size="13" fill="#dde3e8" textLength="30" lengthAdjust="spacingAndGlyphs">News</text>
<text x="783" y="17.2" font-size="13" fill="#dde3e8" textLength="32" lengthAdjust="spacingAndGlyphs">Zoom</text>
<g stroke="#9aa3aa" stroke-width="1" fill="none"><circle cx="560.5" cy="12.5" r="3.5"/><path d="M560.5,6.5v12M554.5,12.5h12"/></g>
<g stroke="#8f979e" fill="none"><path d="M621.5,16.5 L628.5,9.5" stroke-width="2.2"/><path d="M621,18.5h9" stroke-width="1"/></g>
<g fill="#9aa3aa"><rect x="703" y="8" width="3" height="3"/><rect x="707" y="8" width="5" height="1"/><rect x="707" y="10" width="5" height="1"/><rect x="703" y="12" width="9" height="1"/><rect x="703" y="14" width="9" height="1"/><rect x="703" y="16" width="9" height="1"/></g>
<g stroke="#9aa3aa" fill="none"><circle cx="768" cy="11" r="3.5" stroke-width="1.2"/><path d="M770.5,13.5 L774.5,17.5" stroke-width="2"/></g>
<rect x="756.5" y="24" width="63" height="21" fill="#252627" stroke="#3a2a2a" stroke-width="0.8" stroke-dasharray="1 2"/>
<circle cx="770" cy="34.5" r="3.6" fill="none" stroke="#ffffff" stroke-width="2.4"/>
<text x="783" y="39.2" font-size="13" fill="#d8dde2" textLength="32" lengthAdjust="spacingAndGlyphs">Reset</text>
<rect x="0" y="511.5" width="1127" height="4" fill="#4a4a4a"/>
<rect x="558" y="512" width="14" height="1" fill="#9a9a9a"/>
<rect x="558" y="514" width="14" height="1" fill="#9a9a9a"/>
<rect x="0" y="2" width="2" height="655" fill="#ff9a00"/>
<rect x="1073" y="516" width="1" height="179" fill="#f0f0f0"/>
<rect x="0" y="695" width="1074" height="1" fill="#f0f0f0"/>
<rect x="109" y="696" width="1" height="3" fill="#f0f0f0"/>
<rect x="244" y="696" width="1" height="3" fill="#f0f0f0"/>
<rect x="361" y="696" width="1" height="3" fill="#f0f0f0"/>
<rect x="502" y="696" width="1" height="3" fill="#f0f0f0"/>
<rect x="630" y="696" width="1" height="3" fill="#f0f0f0"/>
<rect x="765" y="696" width="1" height="3" fill="#f0f0f0"/>
<rect x="900" y="696" width="1" height="3" fill="#f0f0f0"/>
<rect x="1023" y="696" width="1" height="3" fill="#f0f0f0"/>
<line x1="0" y1="531.5" x2="1073" y2="531.5" stroke="#92979a" stroke-width="1" stroke-dasharray="2 2"/>
<line x1="0" y1="605.5" x2="1073" y2="605.5" stroke="#92979a" stroke-width="1" stroke-dasharray="2 2"/>
<line x1="0" y1="679.5" x2="1073" y2="679.5" stroke="#92979a" stroke-width="1" stroke-dasharray="2 2"/>
<rect x="2" y="568" width="1071" height="1" fill="#ff0000"/>
<rect x="2" y="642" width="1071" height="1" fill="#00dc00"/>
<rect x="1074" y="568" width="4" height="1" fill="#f0f0f0"/>
<rect x="1074" y="642" width="4" height="1" fill="#f0f0f0"/>
<g clip-path="url(#cr)">
<path d="M10.4,642.5 L11.5,644.9 L17.5,658.1 L23.5,658.1 L25.9,642.5z" fill="#587858"/>
<path d="M516.4,642.5 L520.5,649.8 L523,642.5z" fill="#587858"/>
<path d="M559.9,642.5 L563.5,646.2 L564.6,642.5z" fill="#587858"/>
<path d="M714.4,642.5 L716.5,647.7 L722.5,651.6 L726.8,642.5z" fill="#587858"/>
<path d="M733.7,642.5 L734.5,643.1 L740.5,644.6 L747.5,643.9 L748.4,642.5z" fill="#587858"/>
<path d="M762.8,642.5 L765.5,644.6 L767.1,642.5z" fill="#587858"/>
<path d="M803.2,642.5 L808.5,649.8 L810.8,642.5z" fill="#587858"/>
<path d="M828,642.5 L832.5,648.8 L838.5,652.9 L845.5,657.8 L851.5,643.3 L857.5,647.7 L863.5,642.6 L863.6,642.5z" fill="#587858"/>
<path d="M1010.1,568.5 L1010.5,567.1 L1016.5,557.5 L1022.5,551 L1029.5,547.5 L1035.5,546.3 L1035.5,568.5z" fill="url(#dots)"/>
<line x1="109.5" y1="516" x2="109.5" y2="695" stroke="#92979a" stroke-width="1" stroke-dasharray="2 2"/>
<line x1="244.5" y1="516" x2="244.5" y2="695" stroke="#92979a" stroke-width="1" stroke-dasharray="2 2"/>
<line x1="361.5" y1="516" x2="361.5" y2="695" stroke="#92979a" stroke-width="1" stroke-dasharray="2 2"/>
<line x1="502.5" y1="516" x2="502.5" y2="695" stroke="#92979a" stroke-width="1" stroke-dasharray="2 2"/>
<line x1="630.5" y1="516" x2="630.5" y2="695" stroke="#92979a" stroke-width="1" stroke-dasharray="2 2"/>
<line x1="765.5" y1="516" x2="765.5" y2="695" stroke="#92979a" stroke-width="1" stroke-dasharray="2 2"/>
<line x1="900.5" y1="516" x2="900.5" y2="695" stroke="#92979a" stroke-width="1" stroke-dasharray="2 2"/>
<line x1="1023.5" y1="516" x2="1023.5" y2="695" stroke="#92979a" stroke-width="1" stroke-dasharray="2 2"/>
<path d="M-1,629 L5.5,631.7 L11.5,644.9 L17.5,658.1 L23.5,658.1 L29.5,618.7 L35.5,615.1 L42.5,615.1 L48.5,606.6 L54.5,603.2 L60.5,626.8 L66.5,622.1 L72.5,629.4 L78.5,629.4 L84.5,623.7 L91.5,624.4 L97.5,636.4 L103.5,621 L109.5,625.2 L115.5,625.2 L121.5,625.2 L127.5,601.9 L134.5,589 L140.5,609.7 L146.5,616.7 L152.5,606.6 L158.5,596.5 L164.5,579.9 L170.5,577.1 L176.5,584.8 L183.5,591.8 L189.5,581 L195.5,588 L201.5,586.1 L207.5,592.9 L213.5,598 L219.5,607.4 L225.5,617.8 L232.5,593.9 L238.5,582 L244.5,596.8 L250.5,596 L256.5,612.5 L262.5,620.6 L268.5,600.7 L275.5,596 L281.5,599.6 L287.5,597 L293.5,608.1 L299.5,610.5 L305.5,592.9 L311.5,596.5 L317.5,596.5 L324.5,600.7 L330.5,600.1 L336.5,615.1 L342.5,628.3 L348.5,636.4 L354.5,634.8 L360.5,626 L366.5,635.8 L373.5,628.3 L379.5,617.8 L385.5,617.1 L391.5,623.4 L397.5,612.8 L403.5,596.5 L409.5,619.8 L416.5,614 L422.5,609.7 L428.5,601.6 L434.5,600.1 L440.5,607.8 L446.5,596.5 L452.5,612.5 L458.5,614.7 L465.5,618.7 L471.5,603.5 L477.5,596 L483.5,599.6 L489.5,609.7 L495.5,624.9 L501.5,626 L507.5,622.9 L514.5,639.2 L520.5,649.8 L526.5,632.7 L532.5,637.6 L538.5,638.9 L544.5,635.8 L550.5,636.4 L557.5,640 L563.5,646.2 L569.5,626.5 L575.5,615.1 L581.5,596 L587.5,633.8 L593.5,637.6 L599.5,629.1 L606.5,633.8 L612.5,629.6 L618.5,630.7 L624.5,636.4 L630.5,637.6 L636.5,624.9 L642.5,613.6 L648.5,599.1 L655.5,614.3 L661.5,619.8 L667.5,631.4 L673.5,631.1 L679.5,622.1 L685.5,630.7 L691.5,632.2 L697.5,616.2 L704.5,628.3 L710.5,633 L716.5,647.7 L722.5,651.6 L728.5,638.9 L734.5,643.1 L740.5,644.6 L747.5,643.9 L753.5,635.3 L759.5,640 L765.5,644.6 L771.5,636.9 L777.5,639.5 L783.5,626.8 L789.5,623.7 L796.5,629.9 L802.5,641.5 L808.5,649.8 L814.5,631.1 L820.5,637.6 L826.5,640.4 L832.5,648.8 L838.5,652.9 L845.5,657.8 L851.5,643.3 L857.5,647.7 L863.5,642.6 L869.5,634.6 L875.5,628.6 L881.5,616 L888.5,599.1 L894.5,586.5 L900.5,598.3 L906.5,593.7 L912.5,593.2 L918.5,597.5 L924.5,587.3 L930.5,606.7 L937.5,603.4 L943.5,602.8 L949.5,606.7 L955.5,585.6 L961.5,583.6 L967.5,579.2 L973.5,587.3 L979.5,601.7 L986.5,588.2 L992.5,581.9 L998.5,583.1 L1004.5,589.4 L1010.5,567.1 L1016.5,557.5 L1022.5,551 L1029.5,547.5 L1035.5,546.3" fill="none" stroke="#ececec" stroke-width="1.3" stroke-linejoin="round"/>
</g>
<path d="M1074,528.5 L1082,531.5 L1074,534.5z" fill="#f0f0f0"/>
<text x="1083" y="536.3" font-size="13.5" fill="#f4f4f4" textLength="22" lengthAdjust="spacingAndGlyphs">100</text>
<path d="M1074,603.0 L1082,606.0 L1074,609.0z" fill="#f0f0f0"/>
<text x="1083" y="610.8" font-size="13.5" fill="#f4f4f4" textLength="14.5" lengthAdjust="spacingAndGlyphs">50</text>
<path d="M1074,677.0 L1082,680.0 L1074,683.0z" fill="#f0f0f0"/>
<text x="1083" y="684.8" font-size="13.5" fill="#f4f4f4" textLength="7.3" lengthAdjust="spacingAndGlyphs">0</text>
<path d="M1076,547.5 L1082,541 L1127,541 L1127,554 L1082,554z" fill="#ffffff"/>
<text x="1081.5" y="552.3" font-size="13" fill="#101010" textLength="46" lengthAdjust="spacingAndGlyphs">89.9568</text>
<rect x="3.5" y="520" width="256" height="30" rx="4" fill="#15181c" fill-opacity="0.85"/>
<rect x="12" y="529" width="12" height="12" fill="#ffffff"/>
<text transform="translate(28.4,540.8) scale(0.8,1)" font-size="14" fill="#f0f0f0" textLength="56.00" lengthAdjust="spacing">RSI (8)</text>
<text transform="translate(83.8,540.8) scale(0.8,1)" font-size="14" fill="#f0f0f0" textLength="143.75" lengthAdjust="spacing">on Close (GNZGB5)</text>
<text transform="translate(205.6,540.8) scale(0.8,1)" font-size="14" fill="#f0f0f0" textLength="58.00" lengthAdjust="spacing">89.9568</text>
<text x="41" y="710.2" font-size="14" fill="#f0f0f0" textLength="18.6" lengthAdjust="spacingAndGlyphs">Apr</text>
<text x="165" y="710.2" font-size="14" fill="#f0f0f0" textLength="22.6" lengthAdjust="spacingAndGlyphs">May</text>
<text x="292" y="710.2" font-size="14" fill="#f0f0f0" textLength="20.5" lengthAdjust="spacingAndGlyphs">Jun</text>
<text x="422.5" y="710.2" font-size="14" fill="#f0f0f0" textLength="17.7" lengthAdjust="spacingAndGlyphs">Jul</text>
<text x="554.8" y="710.2" font-size="14" fill="#f0f0f0" textLength="21.3" lengthAdjust="spacingAndGlyphs">Aug</text>
<text x="686.9" y="710.2" font-size="14" fill="#f0f0f0" textLength="21" lengthAdjust="spacingAndGlyphs">Sep</text>
<text x="822.4" y="710.2" font-size="14" fill="#f0f0f0" textLength="21.3" lengthAdjust="spacingAndGlyphs">Oct</text>
<text x="950.2" y="710.2" font-size="14" fill="#f0f0f0" textLength="22.4" lengthAdjust="spacingAndGlyphs">Nov</text>
<text x="523" y="726" font-size="14" fill="#f0f0f0" textLength="28.3" lengthAdjust="spacingAndGlyphs">2025</text>
</svg></body></html>
